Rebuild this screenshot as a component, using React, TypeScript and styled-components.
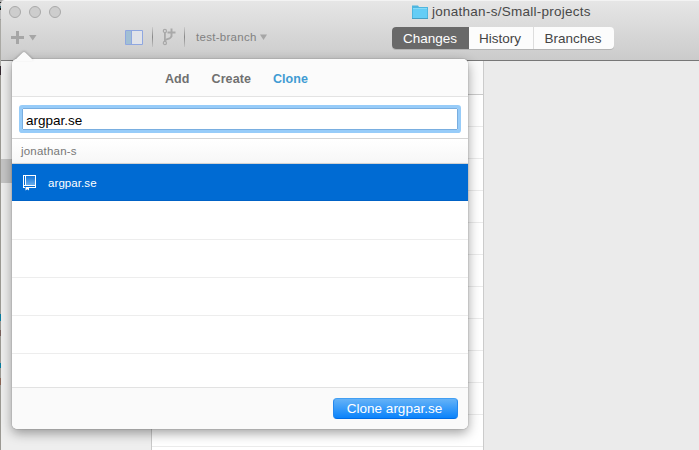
import React from 'react';
import styled, { createGlobalStyle } from 'styled-components';

const GlobalStyle = createGlobalStyle`
  * { box-sizing: border-box; }
  html, body { margin: 0; overflow: hidden; }
  body { font-family: "Liberation Sans", Arial, sans-serif; background: #9b9993; }
`;

const Desktop = styled.div`
  position: relative;
  width: 699px;
  height: 450px;
  overflow: hidden;
  padding-left: 1px;
  display: flex;
  background: linear-gradient(#aaa 0 2px, #222 2px 3px, #bbb 3px 6px, #3b6974 6px 8px, #151515 8px 10px, #bbb 10px 19px, #999 19px 20px,
    #aaa9a4 20px 66px, #33272f 66px 75px, #9b9993 75px 314px, #087c9e 314px 321px, #9b9993 321px 330px,
    #78605b 330px 336px, #9b9993 336px 363px, #087c9e 363px 368px, #9b9993 368px 378px, #8a6454 378px 385px, #9b9993 385px);
`;

const Window = styled.div`
  flex: 1;
  display: flex;
  flex-direction: column;
  border-radius: 4px 0 0 0;
  overflow: hidden;
`;

const Chrome = styled.header`
  height: 61px;
  flex: none;
  background: linear-gradient(#e6e6e6, #cbcbcb);
  border-top: 1px solid #f3f3f3;
  border-bottom: 1px solid #777;
`;

const TitleBar = styled.div`
  height: 21px;
  display: flex;
  align-items: center;
  padding-left: 8px;
`;

const Lights = styled.div`
  display: flex;
  gap: 8px;
  width: 403px;
`;

const Light = styled.span`
  width: 12px;
  height: 12px;
  border-radius: 50%;
  background: #cdcdcd;
  border: 1px solid #a9a9a9;
`;

const Title = styled.span`
  margin-left: 4px;
  font-size: 13.5px;
  line-height: 20px;
  letter-spacing: 0.26px;
  color: #484848;
  white-space: nowrap;
`;

const Toolbar = styled.div`
  height: 32px;
  display: flex;
  align-items: center;
  padding-left: 10px;

  svg { display: block; flex: none; }
`;

const Tools = styled.div`
  display: flex;
  align-items: center;
  width: 381px;
  padding-bottom: 2px;
`;

const AddIcon = styled.svg`
  margin-right: 88px;
`;

const Separator = styled.span`
  width: 1px;
  height: 20px;
  margin: 0 9px;
  background: linear-gradient(#ccc, #888 50%, #c4c4c4);

  & ~ & { margin-left: 8px; }
`;

const BranchName = styled.span`
  margin: 0 3px 0 2px;
  font-size: 11.5px;
  line-height: 14px;
  letter-spacing: 0.28px;
  color: #818181;
  white-space: nowrap;
`;

const Segments = styled.div`
  display: flex;
  height: 22px;
  border-radius: 4px;
  overflow: hidden;
  background: #fcfcfc;
  box-shadow: 0 1px 0 #b4b4b4;
`;

const Segment = styled.div<{ $width: number; $active?: boolean }>`
  width: ${p => p.$width}px;
  padding-right: ${p => (p.$active ? 1 : 2)}px;
  text-align: center;
  font-size: 13.5px;
  line-height: 23px;
  white-space: nowrap;
  color: ${p => (p.$active ? '#fff' : '#444')};
  background: ${p => (p.$active ? '#696969' : 'transparent')};

  & + & + & { border-left: 1px solid #ddd; }
`;

const Body = styled.div`
  flex: 1;
  display: flex;
`;

const Sidebar = styled.aside`
  width: 151px;
  padding-top: 98px;
  background: #eeeeee;
  border-right: 1px solid #c9c9c9;
`;

const SidebarSelection = styled.div`
  height: 24px;
  background: #c5c5c5;
`;

const ChangeList = styled.div`
  width: 332px;
  background: #fff;
  border-right: 1px solid #cbcbcb;
`;

const ChangeHeader = styled.div`
  height: 34px;
  background: #fafafa;
  border-bottom: 1px solid #cacaca;
`;

const ChangeRow = styled.div`
  height: 32px;
  border-bottom: 1px solid #ebebeb;
`;

const Detail = styled.main`
  flex: 1;
  background: #ebebeb;
`;

const Popover = styled.section`
  position: absolute;
  left: 12px;
  top: 59px;
  width: 456px;
  height: 370px;
  border-radius: 5px;
  background: #fff;
  box-shadow: 0 0 1px rgba(0, 0, 0, 0.65), 0 4px 12px rgba(0, 0, 0, 0.38);
`;

const Arrow = styled.svg`
  position: absolute;
  left: 0;
  top: -8px;
  display: block;
  filter: drop-shadow(0 -1px 1px rgba(0, 0, 0, 0.2));
`;

const Tabs = styled.nav`
  height: 38px;
  display: flex;
  gap: 22px;
  padding-left: 153px;
  border-radius: 5px 5px 0 0;
  background: #fbfbfb;
  border-bottom: 1px solid #e3e3e3;
`;

const Tab = styled.span<{ $active?: boolean }>`
  font-size: 12.5px;
  font-weight: bold;
  line-height: 40px;
  letter-spacing: 0.08px;
  color: ${p => (p.$active ? '#419bd3' : '#707070')};
`;

const SearchArea = styled.div`
  height: 42px;
  padding: 11px 10px 0;
  border-bottom: 1px solid #d5d5d5;
`;

const SearchField = styled.div`
  height: 22px;
  padding-left: 3px;
  border: 1px solid #79aee0;
  box-shadow: 0 0 0 3px #97ccf9;
  border-radius: 1px;
  font-size: 13.5px;
  line-height: 24px;
  color: #000;
`;

const GroupHeader = styled.div`
  height: 25px;
  padding-left: 9px;
  font-size: 11.5px;
  line-height: 25px;
  letter-spacing: 0.2px;
  color: #777;
  background: linear-gradient(#fff, #f7f7f7);
  border-bottom: 1px solid #d2d2d2;
  box-shadow: inset 0 -1px 0 #f5f5f5;
`;

const RepoRow = styled.div`
  height: 37px;
  display: flex;
  align-items: center;
  padding: 2px 0 0 10px;
  gap: 11px;
  background: #006bd3;
  border-bottom: 1px solid #0062c6;
  color: #fff;
  font-size: 11.5px;
  letter-spacing: 0.08px;

  svg { margin-bottom: 2px; }
`;

const EmptyRow = styled.div<{ $height: number }>`
  height: ${p => p.$height}px;

  &:not(:nth-last-child(2)) { border-bottom: 1px solid #ededed; }
`;

const Footer = styled.footer`
  height: 42px;
  display: flex;
  justify-content: flex-end;
  padding: 10px 10px 0 0;
  border-top: 1px solid #e2e2e2;
  background: #fafafa;
  border-radius: 0 0 5px 5px;
`;

const CloneButton = styled.button`
  width: 125px;
  height: 21px;
  padding: 0 2px 0 0;
  border: 1px solid;
  border-color: #429ff3 #2588ee #006ce5;
  border-radius: 4px;
  background: linear-gradient(#65b2f7, #0a83fb);
  color: #fff;
  font-family: inherit;
  font-size: 13.5px;
  line-height: 19px;
  white-space: nowrap;
`;

const Caret = () => (
  <svg width="7" height="6" viewBox="0 0 7 6">
    <path d="M0 .5h7L3.5 6z" fill="#a6a6a6" />
  </svg>
);

const FolderIcon = () => (
  <svg width="16" height="14" viewBox="0 0 16 14">
    <path d="M0 .5h6l1 1.500h9v11.500H0z" fill="#4fb6df" />
    <path d="M1 3h14v10H1z" fill="#65cdf5" />
    <path d="M1 3.500h14" stroke="#86daf8" />
    <path d="M0 13.500h16" stroke="#479fc3" />
  </svg>
);

const LayoutIcon = () => (
  <svg width="18" height="15" viewBox="0 0 18 15">
    <path d="M.5.5h17v14H.5z" fill="#e1e3e9" stroke="#8fa7e0" />
    <path d="M1 1h5v13H1z" fill="#a1bfd4" />
    <path d="M6.5 1v13" stroke="#8fa7e0" />
  </svg>
);

const BranchIcon = () => (
  <svg width="14" height="18" viewBox="0 0 14 18" fill="none" stroke="#a9a9a9">
    <circle cx="2.9" cy="3" r="1.6" strokeWidth="1.2" />
    <circle cx="2.9" cy="15" r="1.6" strokeWidth="1.2" />
    <path d="M2.9 4.6v8.8" strokeWidth="1.8" />
    <path d="M3.400 12.500C4.400 10 9 12 9.500 8" strokeWidth="1.8" />
    <path d="M5.500 4.500h8M9.500.5v8" strokeWidth="1.9" />
  </svg>
);

const RepoIcon = () => (
  <svg width="15" height="17" viewBox="0 0 15 17">
    <defs>
      <linearGradient id="cover" x1="0" y1="0" x2="0" y2="1">
        <stop offset="0" stopColor="#1474d6" />
        <stop offset="1" stopColor="#67acec" />
      </linearGradient>
    </defs>
    <path d="M3 2h10v9H3z" fill="url(#cover)" />
    <path d="M1 1h13v1H1zM1 1h1v13H1zM3 1h1v11H3zM13 1h1v13h-1zM1 11h13v1H1zM7 13h7v1H7zM1 13h2v1H1z" fill="#fff" />
    <path d="M3.500 13h3.500v3.500l-1.700-1.200L3.500 16.500z" fill="#fff" />
  </svg>
);

const changeRows = Array.from({ length: 12 }, (_, i) => i);
const emptyRows = [39, 38, 38, 38, 33];

export default function App() {
  return (
    <>
      <GlobalStyle />
      <Desktop>
        <Window>
          <Chrome>
            <TitleBar>
              <Lights><Light /><Light /><Light /></Lights>
              <FolderIcon />
              <Title>jonathan-s/Small-projects</Title>
            </TitleBar>
            <Toolbar>
              <Tools>
                <AddIcon width="26" height="14" viewBox="0 0 26 14">
                  <path d="M0 7.500h13M6.500 1v13" stroke="#a6a6a6" strokeWidth="3" />
                  <path d="M18 5h7.500L21.700 10.500z" fill="#a6a6a6" />
                </AddIcon>
                <LayoutIcon />
                <Separator />
                <BranchIcon />
                <Separator />
                <BranchName>test-branch</BranchName>
                <Caret />
              </Tools>
              <Segments>
                <Segment $width={77} $active>Changes</Segment>
                <Segment $width={64}>History</Segment>
                <Segment $width={81}>Branches</Segment>
              </Segments>
            </Toolbar>
          </Chrome>
          <Body>
            <Sidebar><SidebarSelection /></Sidebar>
            <ChangeList>
              <ChangeHeader />
              {changeRows.map(i => <ChangeRow key={i} />)}
            </ChangeList>
            <Detail />
          </Body>
        </Window>
        <Popover>
          <Arrow width="24" height="10" viewBox="0 0 24 10">
            <path d="M3 9l7.800-7.500q1.200-1 2.400 0L20.500 8.500V10H3z" fill="#fbfbfb" />
          </Arrow>
          <Tabs>
            <Tab>Add</Tab>
            <Tab>Create</Tab>
            <Tab $active>Clone</Tab>
          </Tabs>
          <SearchArea><SearchField>argpar.se</SearchField></SearchArea>
          <GroupHeader>jonathan-s</GroupHeader>
          <RepoRow><RepoIcon />argpar.se</RepoRow>
          {emptyRows.map((height, i) => <EmptyRow key={i} $height={height} />)}
          <Footer><CloneButton>Clone argpar.se</CloneButton></Footer>
        </Popover>
      </Desktop>
    </>
  );
}
